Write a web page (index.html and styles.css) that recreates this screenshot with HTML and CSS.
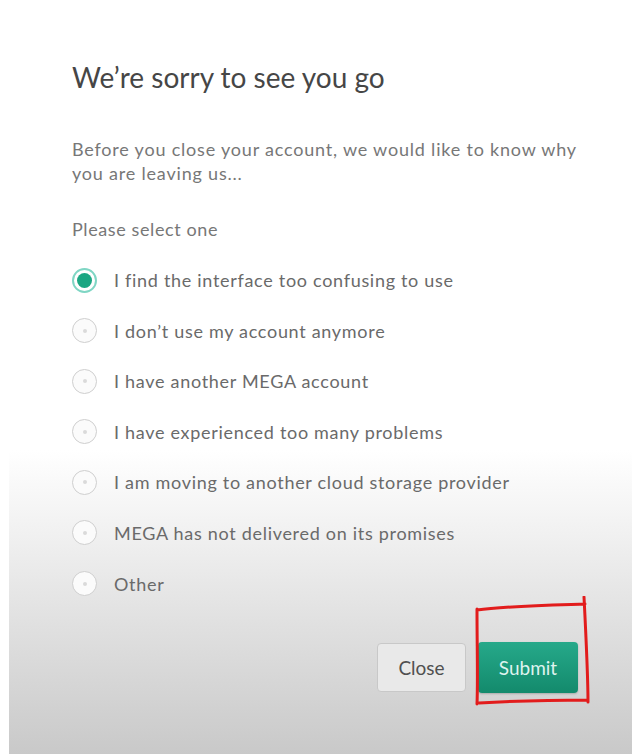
FILE: index.html
```html
<!DOCTYPE html>
<html>
<head>
<meta charset="utf-8">
<link rel="stylesheet" href="styles.css">
</head>
<body>
<div class="panel">
  <h1 class="title">We’re sorry to see you go</h1>
  <p class="intro">Before you close your account, we would like to know why you are leaving us...</p>
  <p class="prompt">Please select one</p>
  <div class="options">
    <label class="option"><span class="radio checked"></span><span class="label">I find the interface too confusing to use</span></label>
    <label class="option"><span class="radio"></span><span class="label">I don’t use my account anymore</span></label>
    <label class="option"><span class="radio"></span><span class="label">I have another MEGA account</span></label>
    <label class="option"><span class="radio"></span><span class="label">I have experienced too many problems</span></label>
    <label class="option"><span class="radio"></span><span class="label">I am moving to another cloud storage provider</span></label>
    <label class="option"><span class="radio"></span><span class="label">MEGA has not delivered on its promises</span></label>
    <label class="option"><span class="radio"></span><span class="label">Other</span></label>
  </div>
  <div class="actions">
    <button class="btn btn-close">Close</button>
    <button class="btn btn-submit">Submit</button>
  </div>
  <svg class="annotation" width="140" height="120" viewBox="0 0 140 120">
    <path d="M12 14 C40 10 90 9 120 8 M119 1 C121 40 123 80 123 106 M123 104 C90 104 50 105 14 107 M12 13 C12 50 13 85 12 108" fill="none" stroke="#e21c1c" stroke-width="3" stroke-linecap="round"/>
  </svg>
</div>
</body>
</html>
```

FILE: styles.css
```css
html, body {
  margin: 0;
  padding: 0;
  background: #ffffff;
}
body {
  font-family: Lato, "Open Sans", sans-serif;
}
.panel {
  position: relative;
  margin-left: 9px;
  width: 623px;
  height: 754px;
  box-sizing: border-box;
  padding: 60px 0 0 63px;
  background: linear-gradient(to bottom, #ffffff 0px, #ffffff 450px, #f3f3f3 520px, #e1e1e1 620px, #c9c9c9 754px);
}
.title {
  margin: 0;
  font-size: 28px;
  line-height: 34px;
  font-weight: 400;
  color: #464646;
}
.intro {
  margin: 43px 0 0;
  width: 515px;
  font-size: 18px;
  letter-spacing: 0.8px;
  line-height: 24px;
  color: #777777;
}
.prompt {
  margin: 32px 0 0;
  font-size: 18px;
  letter-spacing: 0.6px;
  line-height: 24px;
  color: #777777;
}
.options {
  margin-top: 27px;
  display: flex;
  flex-direction: column;
  gap: 26.6px;
}
.option {
  display: flex;
  align-items: center;
  height: 24px;
}
.radio {
  box-sizing: border-box;
  width: 25px;
  height: 25px;
  border-radius: 50%;
  border: 1.5px solid #cfcfcf;
  background: #fbfbfb;
  position: relative;
  flex: none;
}
.radio::after {
  content: "";
  position: absolute;
  left: 50%;
  top: 50%;
  width: 4px;
  height: 4px;
  margin: -2px 0 0 -2px;
  border-radius: 50%;
  background: #dadada;
}
.radio.checked {
  border: 2px solid #7fd6c4;
  background: #ffffff;
}
.radio.checked::after {
  width: 15px;
  height: 15px;
  margin: -7.5px 0 0 -7.5px;
  background: #1ba682;
}
.label {
  margin-left: 17px;
  font-size: 18px;
  letter-spacing: 0.7px;
  line-height: 24px;
  color: #6a6a6a;
}
.actions {
  margin-top: 46px;
  display: flex;
  justify-content: flex-end;
  align-items: center;
  gap: 12px;
  padding-right: 54px;
}
.btn {
  font-family: Lato, "Open Sans", sans-serif;
  font-size: 19px;
  border-radius: 4px;
  cursor: pointer;
}
.btn-close {
  width: 89px;
  height: 49px;
  background: #e9e9e9;
  border: 1.5px solid #c8c8c8;
  color: #505050;
}
.btn-submit {
  width: 100px;
  height: 51px;
  border: none;
  background: linear-gradient(to bottom, #26a98a, #138a6c);
  color: #dff3ee;
  box-shadow: 0 1px 2px rgba(0,0,0,0.2);
}
.annotation {
  position: absolute;
  left: 456px;
  top: 596px;
}
```
